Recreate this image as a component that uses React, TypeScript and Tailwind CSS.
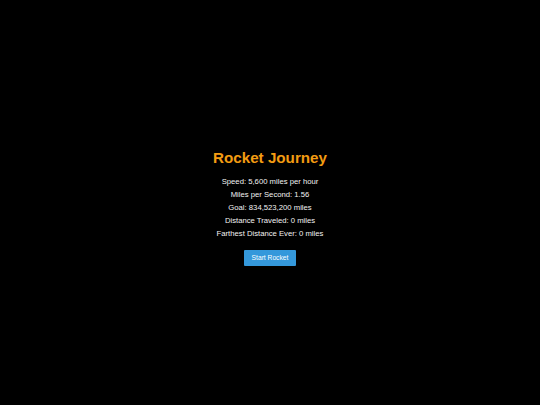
import React, { useState, type ReactElement } from 'react'

const SPEED = 5600
const GOAL = 834523200

export default function App(): ReactElement {
    const [traveled] = useState(0)
    const [farthest] = useState(0)
    const perSecond = (SPEED / 3600).toFixed(2)

    return (
        <div
            className="min-h-screen bg-black flex flex-col items-center justify-center pt-[10px] text-white"
            style={{ fontFamily: '"Liberation Sans", Arial, sans-serif' }}
        >
            <h1 className="text-[15.2px] leading-[17px] font-bold text-[#f39c12]">Rocket Journey</h1>
            <div className="mt-[9px] flex flex-col items-center text-[7.7px] leading-[13px] text-[#f2f2f2]">
                <p>Speed: {SPEED.toLocaleString('en-US')} miles per hour</p>
                <p>Miles per Second: {perSecond}</p>
                <p>Goal: {GOAL.toLocaleString('en-US')} miles</p>
                <p>Distance Traveled: {traveled.toLocaleString('en-US')} miles</p>
                <p>Farthest Distance Ever: {farthest.toLocaleString('en-US')} miles</p>
            </div>
            <button className="mt-[10px] h-[16px] px-[8px] bg-[#3498db] text-white text-[6.7px] leading-[16px] rounded-[1px]">
                Start Rocket
            </button>
        </div>
    )
}
